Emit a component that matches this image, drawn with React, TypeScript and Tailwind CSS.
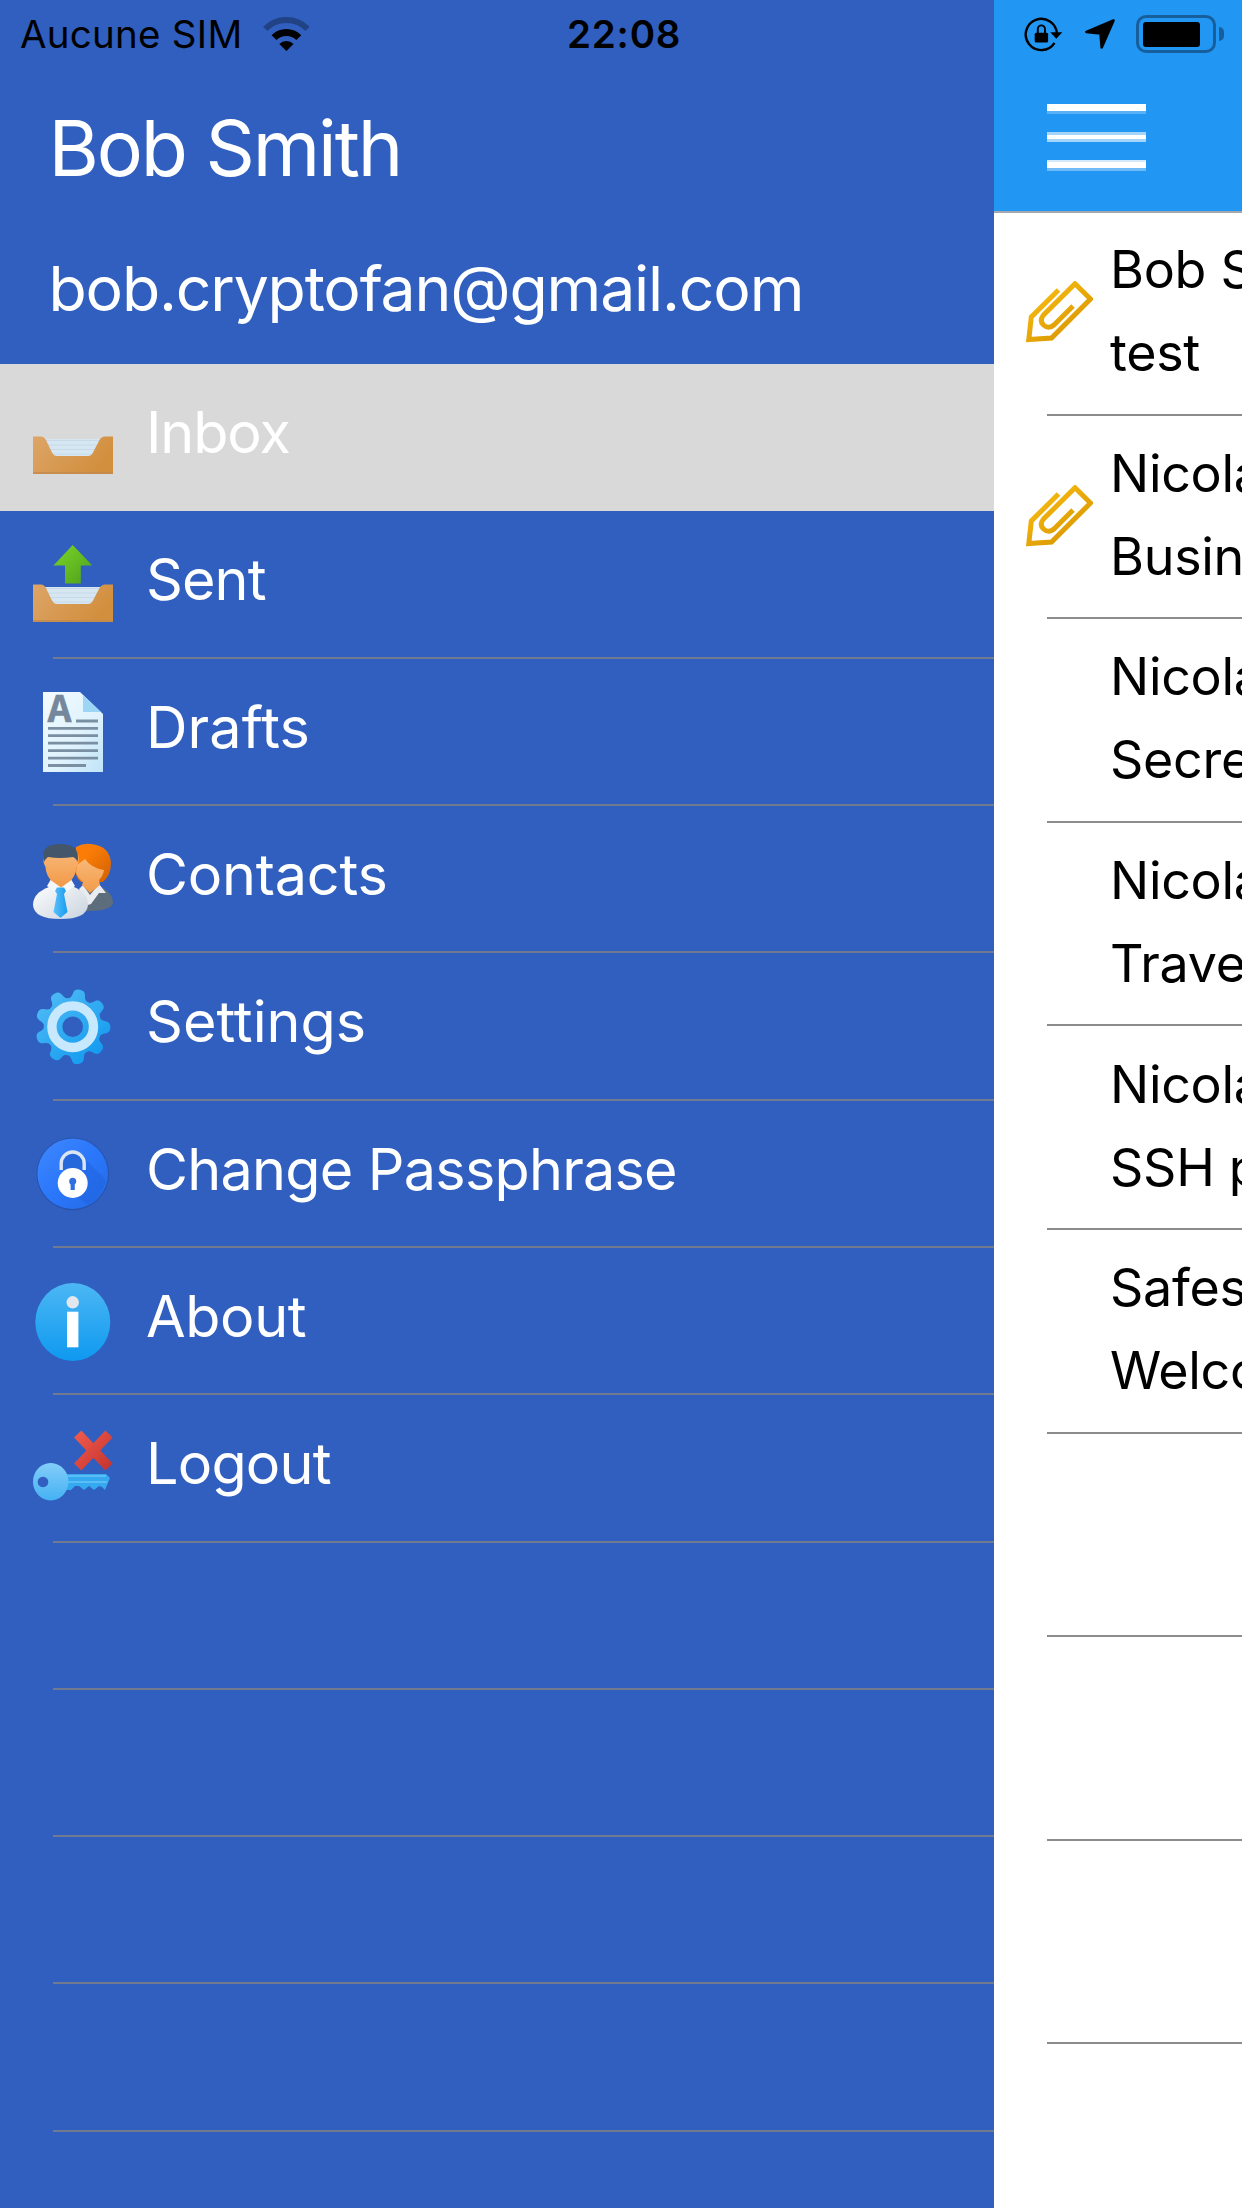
import type { ReactNode } from "react";

function Tray() {
  return (
    <>
      <defs>
        <linearGradient id="tray" x1="0" y1="0" x2="1" y2="0.4">
          <stop offset="0" stopColor="#dda567" />
          <stop offset="1" stopColor="#d28f3e" />
        </linearGradient>
      </defs>
      <path d="M11 42H69L60 61H20Z" fill="#d6e7f2" />
      <path d="M12 43.500H68M14 48H66M16 52.500H64M18 57H62" stroke="#c6dae9" strokeWidth="1" />
      <path d="M0 39.500H8Q11 39.500 13 43L18.500 54.500Q20.500 59 24 59H55Q58.500 59 60.500 54.500L66.500 43Q68.500 39.500 72 39.500H80V77H0Z" fill="url(#tray)" />
      <path d="M0 76H80" stroke="#c08a4c" strokeWidth="1.600" />
    </>
  );
}

function InboxIcon() {
  return <Tray />;
}

function SentIcon() {
  return (
    <>
      <defs>
        <linearGradient id="up" x1="0" y1="0" x2="1" y2="1">
          <stop offset="0" stopColor="#7ad62a" />
          <stop offset="1" stopColor="#4f9f18" />
        </linearGradient>
      </defs>
      <Tray />
      <path d="M39.700 0L59.300 20.500H47.800V38.500H32V20.500H20.500Z" fill="url(#up)" />
    </>
  );
}

function DraftsIcon() {
  return (
    <>
      <defs>
        <linearGradient id="sheet" x1="0" y1="0" x2="1" y2="1">
          <stop offset="0" stopColor="#f3fbff" />
          <stop offset="0.6" stopColor="#dff2fc" />
          <stop offset="1" stopColor="#bfe4f8" />
        </linearGradient>
      </defs>
      <path d="M10 0H47L70 22V80H10Z" fill="url(#sheet)" />
      <path d="M47 0L50 3V20H68L70 22Z" fill="#9dd5f7" />
      <text x="14.500" y="30.300" textLength="24" lengthAdjust="spacingAndGlyphs" className="font-['Liberation_Mono',monospace] text-[40px] font-bold" fill="#74879b" stroke="#74879b" strokeWidth="0.600">A</text>
      <path d="M43 29H65M15 36.300H65M15 43.700H65M15 51.200H65M15 58.700H65M15 66.200H65M15 73.500H53" stroke="#7b8fa3" strokeWidth="2.800" />
    </>
  );
}

function ContactsIcon() {
  return (
    <>
      <defs>
        <linearGradient id="redhair" x1="0" y1="0" x2="1" y2="1">
          <stop offset="0.3" stopColor="#fb7d07" />
          <stop offset="1" stopColor="#d05f04" />
        </linearGradient>
        <linearGradient id="skin" x1="0" y1="0" x2="0" y2="1">
          <stop offset="0" stopColor="#f8b878" />
          <stop offset="1" stopColor="#f29b4a" />
        </linearGradient>
        <linearGradient id="shirt" x1="0" y1="0" x2="1" y2="1">
          <stop offset="0" stopColor="#ffffff" />
          <stop offset="1" stopColor="#c9d3de" />
        </linearGradient>
        <linearGradient id="tie" x1="0" y1="0" x2="1" y2="0">
          <stop offset="0" stopColor="#5cc0fa" />
          <stop offset="1" stopColor="#159cf0" />
        </linearGradient>
      </defs>
      <path d="M50 50Q57 47 66 47Q80 53 80 64Q79 71 58 72H46Z" fill="#5e6d7c" />
      <path d="M46 50L50 46L57 56L66 45L73 54L66 54L58 65L55 66Z" fill="#e8ecf0" />
      <path d="M43 8Q50 4 58 5Q77 7 78 24Q78 36 70 43H48Q42 38 42 28Z" fill="url(#redhair)" />
      <path d="M44 26L52 20Q58 29 71 31Q70 37 66 41L67 46L57 54L49 46L50 43Q45 39 43 34Z" fill="url(#skin)" />
      <path d="M0 66Q0 54 16 48L28 44L41 48Q55 54 55 66Q54 80 27.500 80Q1 80 0 66Z" fill="url(#shirt)" />
      <path d="M18 36H38L39 46L28 51L17 46Z" fill="#f29b4a" />
      <path d="M11 15Q28 9 45 15Q47 24 43.500 28Q43 36 37.500 42Q28 51 18.500 42Q13 36 12.500 28Q9 22 11 15Z" fill="url(#skin)" />
      <path d="M11 23Q6 5 27 5Q48 5 44.500 23Q43 19 40 18Q27 20 15 18Q12 20 11 23Z" fill="#44566a" />
      <path d="M14 47L17.500 41L28 48.500L38.500 41L42 47L33 53L28 49.500L22 53Z" fill="#f4f7fa" />
      <path d="M24 48.500H31L33 52L31 55L34.500 73L27.500 79L20.500 73L24 55L22 52Z" fill="url(#tie)" />
    </>
  );
}

const TEETH = [11, 51, 91, 131, 171, 211, 251, 291, 331];

function SettingsIcon() {
  return (
    <>
      <defs>
        <linearGradient id="gear" gradientUnits="userSpaceOnUse" x1="12" y1="8" x2="66" y2="72">
          <stop offset="0" stopColor="#4ebaf5" />
          <stop offset="1" stopColor="#129aef" />
        </linearGradient>
        <mask id="gearmask">
          <circle cx="39.700" cy="39.700" r="29" fill="white" />
          {TEETH.map((a) => (
            <path key={a} transform={`rotate(${a} 39.700 39.700)`} d="M29 14Q33 12 33.800 6Q34.500 2 39.700 2Q44.900 2 45.600 6Q46.400 12 50.400 14Z" fill="white" />
          ))}
          <circle cx="39.700" cy="39.700" r="10.300" fill="black" />
        </mask>
      </defs>
      <rect width="80" height="80" fill="url(#gear)" mask="url(#gearmask)" />
      <circle cx="39.700" cy="39.700" r="20.800" fill="none" stroke="#c8e9fd" strokeWidth="9.400" />
    </>
  );
}

function LockIcon() {
  return (
    <>
      <defs>
        <linearGradient id="lock" x1="0" y1="0" x2="1" y2="1">
          <stop offset="0" stopColor="#3f88ff" />
          <stop offset="0.5" stopColor="#2b77fb" />
          <stop offset="1" stopColor="#236ae6" />
        </linearGradient>
      </defs>
      <circle cx="39.700" cy="39.900" r="36.300" fill="#2853ac" />
      <circle cx="39.700" cy="39.700" r="35.300" fill="url(#lock)" />
      <path d="M53 26L73 46Q70 62 55 71L40 60Z" fill="#1f62dc" opacity="0.450" />
      <path d="M28.200 36V29.500a11.500 11.500 0 0 1 23 0V36" fill="#2468dc" stroke="#dbe5f4" strokeWidth="3.400" />
      <circle cx="39.700" cy="49" r="15" fill="#fff" />
      <circle cx="39.700" cy="47.300" r="3.500" fill="#2f6fe0" />
      <path d="M39.700 47V56" stroke="#2f6fe0" strokeWidth="4.200" />
    </>
  );
}

function AboutIcon() {
  return (
    <>
      <defs>
        <linearGradient id="info" x1="0" y1="0" x2="0" y2="1">
          <stop offset="0" stopColor="#4cb7f4" />
          <stop offset="1" stopColor="#0e99f0" />
        </linearGradient>
      </defs>
      <ellipse cx="39.800" cy="41" rx="37.500" ry="39" fill="url(#info)" />
      <circle cx="39.700" cy="21.300" r="6.200" fill="#e1e7ed" />
      <rect x="34" y="30.700" width="11.400" height="35.600" fill="#fff" />
    </>
  );
}

function LogoutIcon() {
  return (
    <>
      <defs>
        <linearGradient id="key" x1="0" y1="0" x2="0" y2="1">
          <stop offset="0" stopColor="#83cdf9" />
          <stop offset="1" stopColor="#45b2f3" />
        </linearGradient>
        <linearGradient id="cross" gradientUnits="userSpaceOnUse" x1="42" y1="4" x2="79" y2="41">
          <stop offset="0" stopColor="#f15b4e" />
          <stop offset="1" stopColor="#c4332d" />
        </linearGradient>
      </defs>
      <path d="M33 46H73L77 50L72 62L69 59L66 58L61 62L56 58L51 62L46 58L42 58L38 62H33Z" fill="#34a9f0" />
      <path d="M34 48H73M34 54H74" stroke="#5abdf6" strokeWidth="2" />
      <path fillRule="evenodd" d="M17.700 35a17.700 18.700 0 1 0 .01 0ZM10 48.700a5.300 5.300 0 1 1-.01 0Z" fill="url(#key)" />
      <path d="M44.700 6L76 39M76 6L44.700 39" stroke="url(#cross)" strokeWidth="10" />
    </>
  );
}

const MENU: { label: string; tracking: string; icon: ReactNode }[] = [
  { label: "Inbox", tracking: "tracking-[-1.1px]", icon: <InboxIcon /> },
  { label: "Sent", tracking: "tracking-[-0.9px]", icon: <SentIcon /> },
  { label: "Drafts", tracking: "tracking-[0.1px]", icon: <DraftsIcon /> },
  { label: "Contacts", tracking: "tracking-[-0.2px]", icon: <ContactsIcon /> },
  { label: "Settings", tracking: "tracking-[0px]", icon: <SettingsIcon /> },
  { label: "Change Passphrase", tracking: "tracking-[-0.77px]", icon: <LockIcon /> },
  { label: "About", tracking: "tracking-[-0.4px]", icon: <AboutIcon /> },
  { label: "Logout", tracking: "tracking-[-0.8px]", icon: <LogoutIcon /> },
];

const MESSAGES = [
  { from: "Bob Smith", subject: "test", attachment: true },
  { from: "Nicolas", subject: "Business", attachment: true },
  { from: "Nicolas", subject: "Secret", attachment: false },
  { from: "Nicolas", subject: "Travel", attachment: false },
  { from: "Nicolas", subject: "SSH password", attachment: false },
  { from: "Safester", subject: "Welcome", attachment: false },
];

function Clip() {
  return (
    <svg viewBox="0 0 67 63" className="h-[63px] w-[67px]" fill="none">
      <defs>
        <linearGradient id="clip" gradientUnits="userSpaceOnUse" x1="15" y1="10" x2="45" y2="50">
          <stop offset="0" stopColor="#f6ba10" />
          <stop offset="1" stopColor="#dc9a02" />
        </linearGradient>
      </defs>
      <path d="M32.500 9L5.300 36L2.800 58.500L25.500 57L64.500 18L49 2.700L17.500 34Q13 39.500 17.500 44Q22.500 48.500 28 44L47 25" stroke="url(#clip)" strokeWidth="5" />
    </svg>
  );
}

function Wifi() {
  return (
    <svg viewBox="0 0 47 34" className="h-[34px] w-[47px]" fill="none" stroke="#000">
      <path d="M2.200 11.800A30 30 0 0 1 44.600 11.800" strokeWidth="6" opacity="0.300" />
      <path d="M11 20.600A17.500 17.500 0 0 1 35.800 20.600" strokeWidth="7" />
      <path d="M23.400 34L16.300 26.900A10 10 0 0 1 30.500 26.900Z" fill="#000" stroke="none" />
    </svg>
  );
}

function Drawer() {
  return (
    <aside className="flex h-full w-[994px] shrink-0 flex-col bg-[#305fbf] text-white">
      <div className="flex h-[68px] shrink-0 items-center pl-[20px] text-[38.500px] text-black">
        <span className="w-[243px] pt-[1px] tracking-[0.25px] whitespace-nowrap">Aucune SIM</span>
        <Wifi />
        <span className="ml-[257px] pt-[1px] font-semibold tracking-[0.8px]">22:08</span>
      </div>
      <div className="h-[296.200px] shrink-0 pl-[48.500px]">
        <div className="pt-[25px] text-[77px] leading-[111px] tracking-[-2.1px]">Bob Smith</div>
        <div className="pt-[29px] text-[62.500px] leading-[110px] tracking-[-1.18px]">bob.cryptofan@gmail.com</div>
      </div>
      <nav className="flex flex-col">
        {MENU.map(({ label, tracking, icon }, i) => (
          <div key={label} className={i === 0 ? "h-[147.300px] bg-[#d9d9d9]" : "h-[147.300px]"}>
            <div className="flex h-[145.300px] items-center pl-[33px]">
              <svg viewBox="0 0 80 80" className="mt-[1px] h-[80px] w-[80px] shrink-0">{icon}</svg>
              <span className={`mb-[8px] ml-[33px] text-[57.500px] leading-none ${tracking}`}>{label}</span>
            </div>
            {i > 0 && <div className="ml-[53px] h-[2px] bg-[#727a8f]" />}
          </div>
        ))}
        {[0, 1, 2, 3].map((i) => (
          <div key={i} className="h-[147.300px] pt-[145.300px]">
            <div className="ml-[53px] h-[2px] bg-[#727a8f]" />
          </div>
        ))}
      </nav>
    </aside>
  );
}

function MailPanel() {
  return (
    <main className="h-full w-[248px] shrink-0 overflow-hidden bg-white text-black">
      <header className="h-[213px] border-b-2 border-[#a3a9ae] bg-[#2196f3]">
        <div className="flex h-[68px] items-center pl-[29px]">
          <svg viewBox="0 0 40 36" className="h-[36px] w-[40px]">
            <path d="M31.500 26.800A15.600 15.600 0 1 1 33.900 18" fill="none" stroke="#000" strokeWidth="2.400" />
            <path d="M27.300 16.300H39.300L33.300 22.700Z" />
            <rect x="11.700" y="16.700" width="13.400" height="9.800" rx="1.500" />
            <path d="M14.800 17.500V13a3.600 3.600 0 0 1 7.200 0V17.500" fill="none" stroke="#000" strokeWidth="1.900" />
          </svg>
          <svg viewBox="0 0 30 30" className="ml-[22px] h-[30px] w-[30px]">
            <path d="M28.500 1.500L1.500 13L15.500 14.500L16.700 28.500Z" stroke="#000" strokeWidth="2.600" strokeLinejoin="round" />
          </svg>
          <div className="ml-[21px] h-[38px] w-[80px] rounded-[10px] border-3 border-[#175f9c] p-[3.500px]">
            <div className="h-[25px] w-[57px] rounded-[3px] bg-black" />
          </div>
          <div className="ml-[3px] h-[14px] w-[5px] rounded-r-full bg-[#175f9c]" />
        </div>
        <div className="flex flex-col gap-[18px] pt-[36px] pl-[53px]">
          <div className="h-[10px] w-[99px] border-b-3 border-white/25 bg-white bg-clip-padding" />
          <div className="h-[10px] w-[99px] border-y-3 border-white/60 bg-white bg-clip-padding" />
          <div className="h-[11px] w-[99px] border-t-2 border-b-3 border-t-white/80 border-b-white/35 bg-white bg-clip-padding" />
        </div>
      </header>
      <div className="-mt-[1px]">
        {MESSAGES.map((m, i) => (
          <div key={i} className="h-[203.600px]">
            <div className="flex h-[201.600px] items-center pl-[32px]">
              <div className="w-[84px] shrink-0">{m.attachment && <Clip />}</div>
              <div className="mb-[3px] text-[52px] leading-[83px] tracking-[-0.3px] whitespace-nowrap">
                <div>{m.from}</div>
                <div>{m.subject}</div>
              </div>
            </div>
            <div className="ml-[53px] h-[2px] bg-[#8c8c8c]" />
          </div>
        ))}
        {[0, 1, 2].map((i) => (
          <div key={i} className="h-[203.600px] pt-[201.600px]">
            <div className="ml-[53px] h-[2px] bg-[#8c8c8c]" />
          </div>
        ))}
      </div>
    </main>
  );
}

export default function App() {
  return (
    <div className="flex h-[2208px] w-[1242px] overflow-hidden bg-white font-[Inter,sans-serif]">
      <Drawer />
      <MailPanel />
    </div>
  );
}
